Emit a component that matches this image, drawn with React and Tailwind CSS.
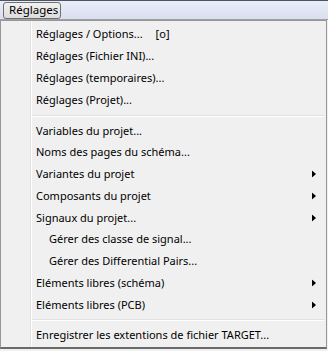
import { useState } from "react";

const groupA = [
  { label: "Réglages / Options...", extra: "[o]" },
  { label: "Réglages (Fichier INI)..." },
  { label: "Réglages (temporaires)..." },
  { label: "Réglages (Projet)..." },
];

const groupB = [
  { label: "Variables du projet..." },
  { label: "Noms des pages du schéma..." },
  { label: "Variantes du projet", sub: true },
  { label: "Composants du projet", sub: true },
  { label: "Signaux du projet...", sub: true },
  { label: "Gérer des classe de signal...", indent: true },
  { label: "Gérer des Differential Pairs...", indent: true },
  { label: "Eléments libres (schéma)", sub: true },
  { label: "Eléments libres (PCB)", sub: true },
];

function Item({ item, h }) {
  return (
    <div className={`relative flex items-center ${h} hover:bg-[#d8e6f7]`}>
      <span className={item.indent ? "pl-[48px]" : "pl-[35px]"}>{item.label}</span>
      {item.extra && <span className="ml-[13px]">{item.extra}</span>}
      {item.sub && (
        <svg className="absolute left-[311px] top-1/2 -translate-y-1/2" width="4" height="7" viewBox="0 0 4 7">
          <path d="M0 0 L4 3.5 L0 7 Z" fill="#000" />
        </svg>
      )}
    </div>
  );
}

function Sep({ h }) {
  return (
    <div className={`flex items-center pl-[31px] pr-[2px] ${h}`}>
      <div className="w-full border-t border-t-[#e0e0e0] border-b border-b-white" />
    </div>
  );
}

export default function App() {
  const [open] = useState(true);

  return (
    <div className="w-[328px] h-[351px] bg-[#f0f0f0] text-[11px] text-black overflow-hidden" style={{ fontFamily: "'Noto Sans', sans-serif" }}>
      <div className="h-[20px] border-t border-t-[#4b5562] border-b border-b-[#a0a0a0] bg-gradient-to-b from-[#e9edf7] to-[#d9dff1] flex items-center pl-[3px]">
        <div className="h-[17px] w-[58px] pl-[5px] flex items-center rounded-[3px] border border-[#707070] bg-gradient-to-b from-[#f2f2f2] to-[#dcdcdc] leading-none text-[11.5px]">
          Réglages
        </div>
      </div>

      {open && (
        <div className="relative w-[327px] h-[329px] border border-[#979797] bg-[#f0f0f0] py-[2px] border-b-2 border-b-[#6a6a6a]">
          <div className="absolute left-[29px] top-0 bottom-0 w-[2px] border-l border-l-[#e2e3e3] border-r border-r-white" />
          {groupA.map((it) => (
            <Item key={it.label} item={it} h="h-[22px]" />
          ))}
          <Sep h="h-[9px]" />
          {groupB.map((it) => (
            <Item key={it.label} item={it} h="h-[21.75px]" />
          ))}
          <Sep h="h-[8px]" />
          <Item item={{ label: "Enregistrer les extentions de fichier TARGET..." }} h="h-[22px]" />
        </div>
      )}
    </div>
  );
}
